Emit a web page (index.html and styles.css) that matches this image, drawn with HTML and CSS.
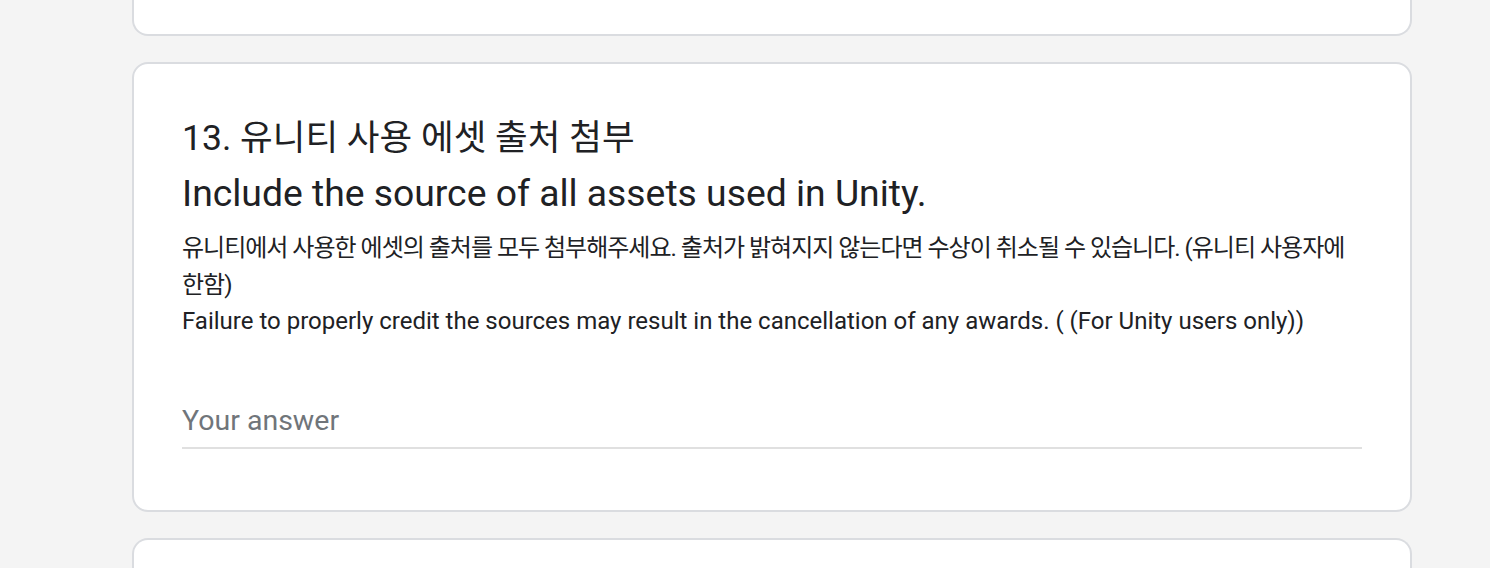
FILE: index.html
```html
<!DOCTYPE html>
<html lang="ko">
<head>
<meta charset="utf-8">
<title>Form question</title>
<link rel="stylesheet" href="styles.css">
</head>
<body>
<div class="page">
  <div class="card card-prev"></div>
  <div class="card card-q">
    <div class="q-title">
      <div class="q-title-ko">13. 유니티 사용 에셋 출처 첨부</div>
      <div class="q-title-en">Include the source of all assets used in Unity.</div>
    </div>
    <div class="q-desc">
      <div class="q-desc-ko">유니티에서 사용한 에셋의 출처를 모두 첨부해주세요. 출처가 밝혀지지 않는다면 수상이 취소될 수 있습니다. (유니티 사용자에 한함)</div>
      <div>Failure to properly credit the sources may result in the cancellation of any awards. ( (For Unity users only))</div>
    </div>
    <div class="answer">Your answer</div>
  </div>
  <div class="card card-next"></div>
</div>
</body>
</html>
```

FILE: styles.css
```css
html, body {
  margin: 0;
  height: 568px;
  overflow: hidden;
}
body {
  background: #f4f4f4;
  font-family: Roboto, "Noto Sans CJK KR", sans-serif;
  color: #202124;
}
.page {
  width: 1280px;
  margin-left: 132px;
  display: flex;
  flex-direction: column;
  gap: 26px;
}
.card {
  box-sizing: border-box;
  background: #fff;
  border: 2px solid #dadce0;
  border-radius: 16px;
  flex: none;
}
.card-prev {
  height: 36px;
  border-top: none;
  border-radius: 0 0 16px 16px;
}
.card-q {
  height: 450px;
  padding: 48px 48px 0;
}
.card-next {
  height: 60px;
  border-bottom: none;
  border-radius: 16px 16px 0 0;
}
.q-title-ko {
  font-size: 35.5px;
  line-height: 52px;
}
.q-title-en {
  font-size: 37.3px;
  line-height: 58px;
}
.q-desc {
  margin-top: 8px;
  font-size: 24px;
  line-height: 36.5px;
}
.q-desc-ko {
  word-break: keep-all;
  letter-spacing: -1px;
}
.answer {
  margin-top: 61px;
  font-size: 28.5px;
  line-height: 39px;
  color: #70757a;
  padding-bottom: 7px;
  border-bottom: 2px solid #e0e0e0;
}
```
